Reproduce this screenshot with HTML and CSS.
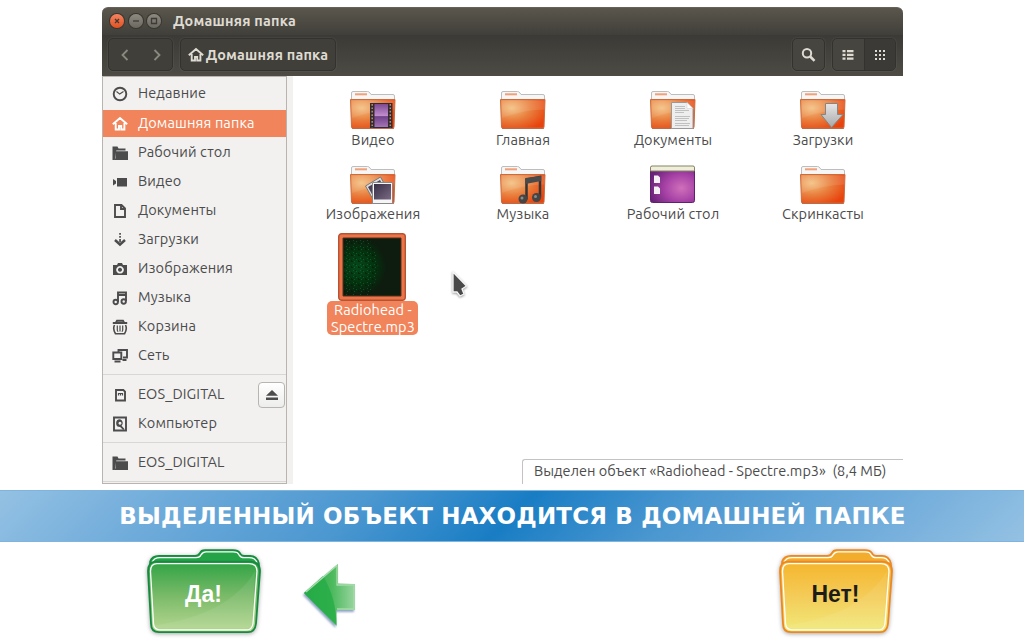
FILE: index.html
```html
<!DOCTYPE html>
<html lang="ru">
<head>
<meta charset="utf-8">
<title>Домашняя папка</title>
<link rel="stylesheet" href="styles.css">
</head>
<body>
<svg class="defs" width="0" height="0">
  <defs>
    <radialGradient id="orange" cx=".25" cy=".3" r=".85"><stop offset="0" stop-color="#f3c080"/><stop offset=".5" stop-color="#e97f3e"/><stop offset="1" stop-color="#e8430d"/></radialGradient>
    <linearGradient id="shade" x2="0" y2="1"><stop offset="0" stop-color="#fff" stop-opacity=".12"/><stop offset="1" stop-color="#fff" stop-opacity=".08"/></linearGradient>
    <radialGradient id="purple" cx=".7" cy=".6" r=".75"><stop offset="0" stop-color="#d070ba"/><stop offset=".5" stop-color="#a742a6"/><stop offset="1" stop-color="#672277"/></radialGradient>
    <linearGradient id="film" x2="0" y2="1"><stop offset="0" stop-color="#7d4a91"/><stop offset=".5" stop-color="#c08ccc"/><stop offset=".55" stop-color="#71428a"/><stop offset="1" stop-color="#a474b4"/></linearGradient>
    <linearGradient id="silver" x2="0" y2="1"><stop offset="0" stop-color="#e6e6e6"/><stop offset="1" stop-color="#a8a8a8"/></linearGradient>
    <linearGradient id="photo" x2="1" y2="1"><stop offset="0" stop-color="#382f45"/><stop offset="1" stop-color="#796a83"/></linearGradient>
    <linearGradient id="green" x2="0" y2="1"><stop offset="0" stop-color="#2fa344"/><stop offset=".5" stop-color="#7cbb6a"/><stop offset="1" stop-color="#b7d892"/></linearGradient>
    <linearGradient id="yellow" x2="0" y2="1"><stop offset="0" stop-color="#f5b52c"/><stop offset=".5" stop-color="#f4cc59"/><stop offset="1" stop-color="#f0ea7a"/></linearGradient>
    <linearGradient id="arrow" x2="1" y2="0"><stop offset="0" stop-color="#23a845"/><stop offset=".55" stop-color="#4cb95d"/><stop offset="1" stop-color="#9ad5a0"/></linearGradient>
    <radialGradient id="dots" cx=".25" cy=".5" r=".5"><stop offset="0" stop-color="#06481a"/><stop offset=".6" stop-color="#04310f"/><stop offset="1" stop-color="#0d1c0e"/></radialGradient>
    <pattern id="grain" width="7" height="6" patternUnits="userSpaceOnUse"><path fill="#128f3c" opacity=".4" d="M1 1h1v1H1zM4 2h1v1H4zM2 4h1v1H2z"/><path fill="#021a06" opacity=".6" d="M3 1h1v1H3zM6 3h1v2H6zM0 4h1v1H0z"/></pattern>
    <symbol id="folder" viewBox="0 0 48 42">
      <path d="M2.500 13V3q0-1.500 1.500-1.500h14.500q1.500 0 2.500 1.500l1 1.500h22q1.500 0 1.500 1.500v7z" fill="#f6f6f6" stroke="#bdbdbd"/>
      <path d="M6 3.300h12v2H6z" fill="#f2a078"/>
      <path d="M1.500 9.500h44.500L45 37q0 1-1 1H3.500q-1 0-1-1z" fill="url(#orange)" stroke="#cf6a3c"/>
      <path d="M2.500 10.500h43l-.4 9Q24 20 3 28z" fill="url(#shade)"/>
      <path d="M3 38.500h42" stroke="#a43a12" opacity=".6"/>
    </symbol>
    <symbol id="s-folder" viewBox="0 0 16 16"><path d="M.5 1.500h5l1 2h7v2H4.300L2.800 15H.5z"/><path d="M4 6.200h12V15H2.500V4.500h1V13.500H4z"/></symbol>
    <symbol id="s-home" viewBox="0 0 16 16"><path d="M.8 8.300 8 2l7.200 6.300M3.700 7v6.500H7v-3.500h2.200v3.500h3.200V7" fill="none" stroke="currentColor" stroke-width="1.900"/></symbol>
  </defs>
</svg>

<main class="window">
  <header class="titlebar">
    <span class="wbtn close"><svg viewBox="0 0 14 14"><path d="m5 5 4 4m0-4L5 9"/></svg></span>
    <span class="wbtn"><svg viewBox="0 0 14 14"><path d="M4 7h6"/></svg></span>
    <span class="wbtn"><svg viewBox="0 0 14 14"><path d="M4.500 4.500h5v5h-5z"/></svg></span>
    <h1 class="title">Домашняя папка</h1>
  </header>
  <nav class="toolbar">
    <div class="box history">
      <svg viewBox="0 0 14 14"><path d="M9.500 2 4.500 7l5 5"/></svg>
      <svg viewBox="0 0 14 14"><path d="m4.500 2 5 5-5 5"/></svg>
    </div>
    <div class="box path"><svg><use href="#s-home"/></svg><span>Домашняя папка</span></div>
    <div class="box search"><svg viewBox="0 0 16 16"><circle cx="6" cy="6.300" r="4.200" fill="none" stroke="currentColor" stroke-width="2"/><path d="m9.200 9.500 4.300 4.300" stroke="currentColor" stroke-width="2.500"/></svg></div>
    <div class="box views">
      <span class="view"><svg viewBox="0 0 12 12"><path d="M.5 1h3v2.300h-3zm0 3.700h3V7h-3zm0 3.700h3v2.300h-3zM5 1h6.500v2.300H5zm0 3.700h6.500V7H5zm0 3.700h6.500v2.300H5z"/></svg></span>
      <span class="view active"><svg viewBox="0 0 12 12"><path d="M1 1h2v2H1zm4 0h2v2H5zm4 0h2v2H9zM1 5h2v2H1zm4 0h2v2H5zm4 0h2v2H9zM1 9h2v2H1zm4 0h2v2H5zm4 0h2v2H9z"/></svg></span>
    </div>
  </nav>

  <div class="body">
    <aside class="sidebar">
      <div class="place"><svg viewBox="0 0 16 16"><circle cx="8" cy="8" r="6.300" class="ln"/><path d="m4.500 5.500 3.200 2.600 3.800-2.500" class="thin"/></svg><span>Недавние</span></div>
      <div class="place selected"><svg><use href="#s-home"/></svg><span>Домашняя папка</span></div>
      <div class="place"><svg><use href="#s-folder"/></svg><span>Рабочий стол</span></div>
      <div class="place"><svg viewBox="0 0 16 16"><path d="M5 4h10v8.500H5zM1 5l3 2v2.500l-3 2z"/></svg><span>Видео</span></div>
      <div class="place"><svg viewBox="0 0 16 16"><path d="M3 2h6.500L13 5.500V14H3zM9 2v4h4" class="ln"/></svg><span>Документы</span></div>
      <div class="place"><svg viewBox="0 0 16 16"><path d="M7.200 1h1.700v1.800H7.200zm0 3h1.700v1.800H7.200zm0 3h1.700v3H7.200z"/><path d="m3 8 5 4.500L13 8" fill="none" stroke="currentColor" stroke-width="2.500"/></svg><span>Загрузки</span></div>
      <div class="place"><svg viewBox="0 0 16 16"><path fill-rule="evenodd" d="M1 4h4l1-2h4l1 2h4v10H1zm7 1a3.800 3.800 0 1 0 .01 0zm0 1.800a2 2 0 1 1-.01 0z"/></svg><span>Изображения</span></div>
      <div class="place"><svg viewBox="0 0 16 16"><path d="M6 12V2.500h8V11M6 5h8" class="ln"/><circle cx="3.700" cy="12" r="2.200" class="ln"/><circle cx="11.700" cy="11.500" r="2.200" class="ln"/></svg><span>Музыка</span></div>
      <div class="place"><svg viewBox="0 0 16 16"><path d="M.8 4h14.400M4 3.500l1-1.700h6l1 1.700" class="ln"/><path d="M2.500 6Q.5 10 3.500 14.700h9Q15.500 10 13.500 6" fill="none" stroke="currentColor" stroke-width="1.600"/><path d="M5.300 6.500v4.500q0 1.500 1 1.500M8 6.500v6m2.700-6V11q0 1.500-1 1.500" class="thin"/></svg><span>Корзина</span></div>
      <div class="place"><svg viewBox="0 0 16 16"><path d="M1.300 4.500h8v6.500h-8zM6.500 3.500V2H15v7.500h-4M2.500 13.500h6M10.500 12h4" class="ln"/></svg><span>Сеть</span></div>
      <hr>
      <div class="place"><svg viewBox="0 0 16 16"><path d="M4 3h7.300l1.700 1.700v8.800H4z" class="ln"/><path d="M6.500 8.500v-2h4v2m-2-2v2" class="thin"/></svg><span>EOS_DIGITAL</span><b class="eject"><svg viewBox="0 0 14 14"><path d="m7 2 6 5.800H1zM1 9.500h12V12H1z"/></svg></b></div>
      <div class="place"><svg viewBox="0 0 16 16"><path d="M2 1.500h12v13H2z" class="ln"/><path fill-rule="evenodd" d="M8 3.300a3.900 3.900 0 1 0 .1 7.800l3.100 2.900 1.300-1-2.900-3.200A3.900 3.900 0 0 0 8 3.300zm0 2.500a1.500 1.500 0 1 1-.01 0z"/></svg><span>Компьютер</span></div>
      <hr>
      <div class="place"><svg><use href="#s-folder"/></svg><span>EOS_DIGITAL</span></div>
      <hr>
    </aside>

    <section class="files">
      <div class="grid">
        <figure class="file"><svg viewBox="0 0 48 42"><use href="#folder"/><path d="M21 13h22.500v25H21z" fill="#302b34"/><path d="M25.500 14h13.500v23H25.500z" fill="url(#film)"/><path d="M23.200 14v24M41.300 14v24" stroke="#c98855" stroke-width="1.500" stroke-dasharray="1.700 1.700"/></svg><figcaption>Видео</figcaption></figure>
        <figure class="file"><svg><use href="#folder"/></svg><figcaption>Главная</figcaption></figure>
        <figure class="file"><svg viewBox="0 0 48 42"><use href="#folder"/><path d="M22.500 12.500H38l6 6V38.500h-21.500z" fill="#eee" stroke="#999"/><path d="M38 12.500v6h6z" fill="#fff" stroke="#ccc" stroke-width=".5"/><path d="M26 16.500h10m-10 2h10m-10 2h14m-14 2h9m-9 4h15m-15 2h14m-14 2h12m-12 3h15m-15 2h14" stroke="#c0c0c0"/></svg><figcaption>Документы</figcaption></figure>
        <figure class="file"><svg viewBox="0 0 48 42"><use href="#folder"/><path d="M26.500 13.500h12v11H44L32.500 37.500 22 24.500h4.500z" fill="url(#silver)" stroke="#858585"/></svg><figcaption>Загрузки</figcaption></figure>
        <figure class="file"><svg viewBox="0 0 48 42"><use href="#folder"/><path d="m16.500 21 15-9 9 16-15 9z" fill="#ddd" stroke="#777"/><path d="m19 22 12-7 6 11-12 7z" fill="url(#photo)"/><path d="M23.500 17.500h20v21h-20z" fill="#f5f5f5" stroke="#888"/><path d="M25 19h17v15.500H25z" fill="url(#photo)"/></svg><figcaption>Изображения</figcaption></figure>
        <figure class="file"><svg viewBox="0 0 48 42"><use href="#folder"/><path d="M27.500 34.500v-20L41 12v20.500" fill="none" stroke="#353535" stroke-width="2.500"/><path d="m26.300 13 16-2v5l-16 3z" fill="#4a4a4a"/><circle cx="24" cy="34" r="4.500" fill="#454545"/><circle cx="37.500" cy="32.500" r="4.500" fill="#454545"/><circle cx="23" cy="33" r="1.500" fill="#8a8a8a"/><circle cx="36.500" cy="31.500" r="1.500" fill="#8a8a8a"/></svg><figcaption>Музыка</figcaption></figure>
        <figure class="file"><svg viewBox="0 0 48 42"><rect x="1.500" y="1.500" width="44" height="36" rx="2" fill="url(#purple)" stroke="#602170"/><path d="M1.500 6V2.500Q1.500 1 3 1h41q1.500 0 1.500 1.500V6z" fill="#eeeed9" stroke="#858565"/><path d="M5 10.500h4l2 2V18H5zM5 21.500h4l2 2V29H5z" fill="#f4f1f4"/></svg><figcaption>Рабочий стол</figcaption></figure>
        <figure class="file"><svg><use href="#folder"/></svg><figcaption>Скринкасты</figcaption></figure>
        <figure class="file chosen">
          <svg viewBox="0 0 68 68"><rect x=".7" y=".7" width="66.600" height="66.600" rx="3" fill="#ed7448" stroke="#b55332" stroke-width="1.400"/><path d="M5 5h58v58H5z" fill="url(#dots)" stroke="#54301d"/><path d="M6 6h25q17 27 0 56H6z" fill="url(#grain)"/></svg>
          <figcaption>Radiohead -<br>Spectre.mp3</figcaption>
        </figure>
      </div>
      <svg class="cursor" viewBox="0 0 18 28"><path d="M2 1 15.500 15 11 18l2 5-4 2-3-4-4 0z" fill="#4a4a4a" stroke="#f7f7f7" stroke-width="1.300"/></svg>
      <p class="status">Выделен объект «Radiohead - Spectre.mp3» &nbsp;(8,4 МБ)</p>
    </section>
  </div>
</main>

<h2 class="banner">ВЫДЕЛЕННЫЙ ОБЪЕКТ НАХОДИТСЯ В ДОМАШНЕЙ ПАПКЕ</h2>

<footer class="answers">
  <div class="answer yes">
    <svg viewBox="0 0 120 92" preserveAspectRatio="none"><path class="back" d="M7 20V13q2-6 9-6h36q3 0 5-3 1-3 5-3h28q5 0 7 3 1 3 4 3h6q7 0 9 8v6z"/><path class="back-ln" d="M9 14q2-5 8-5h36q4 0 5-3 2-3 5-3h27q5 0 6 3 2 3 5 3h5q6 0 8 5"/><path class="front" d="M13 13h94q10 0 10 10l-4 54q-1 9-8 9H16q-8 0-8-9L5 23q0-10 8-10z"/><path class="front-ln" d="M14 15h92q8 0 8 8l-4 54q-1 6.500-6 6.500H17q-6 0-6.500-6.500L7.500 23q0-8 6.500-8z"/><path d="M112 23 109 77q-1 5-6 5H17q-5 0-6-3 75-11 101-56z" fill="#fff" opacity=".08"/></svg>
    <span>Да!</span>
  </div>
  <svg class="pointer" viewBox="0 0 58 70"><path d="M3 34 37 5v19.500l17 .5v26H35.500V67z" fill="url(#arrow)"/><path d="M3 34 22 17q13 21 13.500 49z" fill="#25ac46" opacity=".8"/><path d="M5 33 36 6.500v19.500h17v24H36" fill="none" stroke="#a5dba9" stroke-width="1.300"/></svg>
  <div class="answer no">
    <svg viewBox="0 0 120 92" preserveAspectRatio="none"><path class="back" d="M7 20V13q2-6 9-6h36q3 0 5-3 1-3 5-3h28q5 0 7 3 1 3 4 3h6q7 0 9 8v6z"/><path class="back-ln" d="M9 14q2-5 8-5h36q4 0 5-3 2-3 5-3h27q5 0 6 3 2 3 5 3h5q6 0 8 5"/><path class="front" d="M13 13h94q10 0 10 10l-4 54q-1 9-8 9H16q-8 0-8-9L5 23q0-10 8-10z"/><path class="front-ln" d="M14 15h92q8 0 8 8l-4 54q-1 6.500-6 6.500H17q-6 0-6.500-6.500L7.500 23q0-8 6.500-8z"/><path d="M112 23 109 77q-1 5-6 5H17q-5 0-6-3 75-11 101-56z" fill="#fff" opacity=".08"/></svg>
    <span>Нет!</span>
  </div>
</footer>
</body>
</html>
```

FILE: styles.css
```css
* { box-sizing: border-box; }
body { margin: 0; height: 640px; overflow: hidden; background: #fff; font-family: Ubuntu, "Noto Sans", sans-serif; font-size: 14.500px; color: #4c4c4c; }
h1, h2, p, figure { margin: 0; }
svg { display: block; fill: currentColor; flex: none; }
.defs { position: absolute; }

.window { width: 801px; height: 477px; margin: 7px 0 0 102px; display: flex; flex-direction: column; }
.titlebar { height: 28px; display: flex; align-items: center; gap: 4.500px; padding: 0 0 1px 8px; border-radius: 6px 6px 0 0; background: linear-gradient(#5a564c, #403f3a); border-top: 1px solid #666257; color: #dfdbd2; }
.wbtn { width: 14px; height: 14px; border-radius: 50%; background: linear-gradient(#8d8a80, #6b6860); box-shadow: 0 0 0 1px #37352f; }
.wbtn svg { width: 14px; height: 14px; fill: none; stroke: #3c3b37; stroke-width: 1.300; }
.wbtn.close { background: linear-gradient(#f58360, #e4511f); }
.title { margin-left: 7.500px; font-size: 14.400px; font-weight: 700; letter-spacing: .22px; line-height: 20px; white-space: nowrap; }
.toolbar { height: 41px; display: flex; align-items: center; padding: 0 7px 2px 6px; background: linear-gradient(#3b3a36, #4d4b44); color: #dfdbd2; }
.box { height: 33px; display: flex; align-items: center; justify-content: center; border: 1px solid #33322e; border-radius: 5px; background: #403f3a; box-shadow: 0 0 0 1px rgba(255,255,255,.04); }
.history { width: 65px; gap: 18px; }
.history svg { width: 14px; height: 14px; fill: none; stroke: #8c8981; stroke-width: 1.800; }
.path { width: 156px; margin-left: 7px; gap: 2px; font-weight: 700; font-size: 14.400px; letter-spacing: .2px; white-space: nowrap; }
.path svg { width: 16px; height: 16px; }
.search { width: 33px; margin-left: auto; background: #464540; }
.search svg { width: 16px; height: 16px; }
.views { width: 64px; margin-left: 7px; background: #464540; }
.view { flex: 1; height: 100%; display: flex; align-items: center; justify-content: center; }
.view svg { width: 12px; height: 12px; }
.view.active { background: #3b3a36; border-left: 1px solid #33322e; border-radius: 0 4px 4px 0; }

.body { flex: 1; display: flex; min-height: 0; }
.sidebar { width: 185px; padding-top: 2.900px; background: #f2f1f0; border: 1px solid #b8b5b0; overflow: hidden; letter-spacing: .13px; }
.place { height: 29.100px; display: flex; align-items: center; gap: 10px; padding-left: 9px; line-height: 24px; white-space: nowrap; border: solid transparent; border-width: 1px 0; background-clip: padding-box; }
.place > svg { width: 16px; height: 16px; }
.place > span { padding-bottom: 2px; }
.place.selected { background-color: #f1845a; color: #fff; }
.ln { fill: none; stroke: currentColor; stroke-width: 1.900; }
.thin { fill: none; stroke: currentColor; stroke-width: 1.200; }
.sidebar hr { height: 1px; margin: 3.600px 0 5px; border: 0; background: #d9d7d5; }
.eject { width: 27px; height: 26px; margin: 0 1px 0 auto; display: grid; place-items: center; border: 1px solid #b8b5b0; border-radius: 4px; background: linear-gradient(#fff, #ededeb); }
.eject svg { width: 14px; height: 14px; }

.files { position: relative; flex: 1; border-left: 6px solid #f2f1f0; display: flex; flex-direction: column; justify-content: space-between; }
.grid { display: grid; grid-template-columns: repeat(4, 150px); grid-auto-rows: 74.500px; padding: 14px 0 0 4.500px; }
.file { display: flex; flex-direction: column; align-items: center; }
.file svg { width: 48px; height: 42px; }
.file figcaption { margin-top: -1.500px; padding-left: 1px; line-height: 18px; white-space: nowrap; letter-spacing: .1px; }
.chosen { margin-top: -6px; }
.chosen svg { width: 68px; height: 68px; margin-left: -1px; }
.chosen figcaption { width: 91px; height: 36px; margin-top: 0; padding: 0 0 0 1px; border-radius: 5px; background: #f1845a; color: #fff; line-height: 17px; text-align: center; }
.cursor { position: absolute; left: 158px; top: 195px; width: 18px; height: 28px; filter: drop-shadow(0 1px 1px rgba(0,0,0,.4)); }
.status { align-self: flex-end; width: 381px; height: 25px; padding-left: 11px; border: 1px solid #c4c3c2; border-width: 1px 0 0 1px; border-radius: 3px 0 0; line-height: 21px; white-space: nowrap; }

.banner { height: 52px; margin-top: 6px; border: solid #7db5de; border-width: 1px 0; background: linear-gradient(135deg, #94c1e3, #72addb 15%, #4b97d0 35%, #197dc4 50%, #4b97d0 65%, #72addb 85%, #94c1e3); color: #fff; font: 700 23px/50px "DejaVu Sans", sans-serif; text-align: center; letter-spacing: .17px; text-indent: 1px; white-space: nowrap; }
.answers { height: 98px; display: flex; align-items: flex-start; padding: 7px 129px 0 143px; }
.answer { width: 120px; height: 89px; display: grid; font: 700 23px "Liberation Sans", Arial, sans-serif; }
.answer > * { grid-area: 1 / 1; }
.answer svg { width: 120px; height: 89px; filter: drop-shadow(0 1px 2px rgba(0,0,0,.35)); }
.answer span { align-self: center; justify-self: center; z-index: 1; margin: 2px 0 0 1px; }
.yes { color: #fff; }
.yes .back { fill: #25a347; stroke: #168a40; stroke-width: 1.500; }
.yes .front { fill: url(#green); stroke: #168a40; stroke-width: 1.800; }
.no { margin-left: auto; color: #1c1c1a; }
.no .back { fill: #f2ad2c; stroke: #ee8722; stroke-width: 1.500; }
.no .front { fill: url(#yellow); stroke: #ee8722; stroke-width: 1.800; }
.back-ln, .front-ln { fill: none; stroke: #fff; stroke-width: 1.300; }
.pointer { width: 58px; height: 70px; margin: 10px 0 0 38px; filter: drop-shadow(-1px 2px 1px rgba(50,90,150,.55)); }
```
